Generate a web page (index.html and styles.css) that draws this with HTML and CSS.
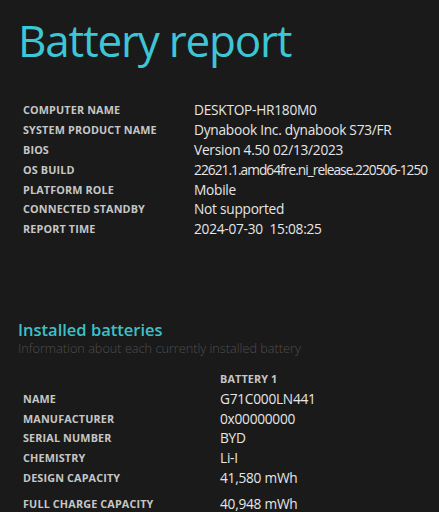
FILE: index.html
```html
<!DOCTYPE html>
<html>
<head>
<meta charset="utf-8">
<link rel="stylesheet" href="styles.css">
</head>
<body>
<h1 class="title">Battery report</h1>
<div class="grid info">
  <div class="label">COMPUTER NAME</div><div class="value">DESKTOP-HR180M0</div>
  <div class="label">SYSTEM PRODUCT NAME</div><div class="value">Dynabook Inc. dynabook S73/FR</div>
  <div class="label">BIOS</div><div class="value">Version 4.50 02/13/2023</div>
  <div class="label">OS BUILD</div><div class="value narrow">22621.1.amd64fre.ni_release.220506-1250</div>
  <div class="label">PLATFORM ROLE</div><div class="value">Mobile</div>
  <div class="label">CONNECTED STANDBY</div><div class="value">Not supported</div>
  <div class="label">REPORT TIME</div><div class="value">2024-07-30&nbsp;&nbsp;15:08:25</div>
</div>
<h2 class="section">Installed batteries</h2>
<div class="subtitle">Information about each currently installed battery</div>
<div class="grid batteries">
  <div class="label"></div><div class="label">BATTERY 1</div>
  <div class="label">NAME</div><div class="value">G71C000LN441</div>
  <div class="label">MANUFACTURER</div><div class="value">0x00000000</div>
  <div class="label">SERIAL NUMBER</div><div class="value">BYD</div>
  <div class="label">CHEMISTRY</div><div class="value">Li-I</div>
  <div class="label">DESIGN CAPACITY</div><div class="value">41,580 mWh</div>
  <div class="label tall">FULL CHARGE CAPACITY</div><div class="value tall">40,948 mWh</div>
</div>
</body>
</html>
```
FILE: styles.css
```css
html, body {
  margin: 0;
  padding: 0;
  background: #1a1a1a;
  font-family: "Open Sans", "Noto Sans", sans-serif;
  overflow: hidden;
}
body {
  padding: 0 0 0 18px;
}
.title {
  margin: 0;
  padding-top: 10px;
  font-weight: 400;
  font-size: 44px;
  line-height: 60px;
  color: #3cc6d6;
  letter-spacing: -1.2px;
}
.grid {
  display: grid;
  grid-auto-rows: 19.8px;
  align-items: center;
  margin-left: 5px;
}
.info {
  grid-template-columns: 171px max-content;
  margin-top: 30px;
}
.label {
  font-size: 10.8px;
  font-weight: 700;
  color: #c6c6c6;
  letter-spacing: 0.15px;
  white-space: nowrap;
}
.value {
  font-size: 13.7px;
  color: #e6e6e6;
  white-space: nowrap;
  letter-spacing: -0.25px;
}
.value.narrow {
  letter-spacing: -0.95px;
}
.section {
  margin: 80px 0 0 0;
  font-size: 16.5px;
  font-weight: 600;
  color: #3ec0c8;
  line-height: 22px;
}
.subtitle {
  margin-top: -2px;
  font-size: 12.7px;
  font-weight: 300;
  color: #4e4e4e;
  line-height: 18px;
}
.batteries {
  grid-template-columns: 197px max-content;
  grid-template-rows: 19.8px repeat(5, 19.8px) 26px;
  margin-top: 12px;
}
.batteries .tall {
  align-self: end;
  line-height: 18px;
}
```
